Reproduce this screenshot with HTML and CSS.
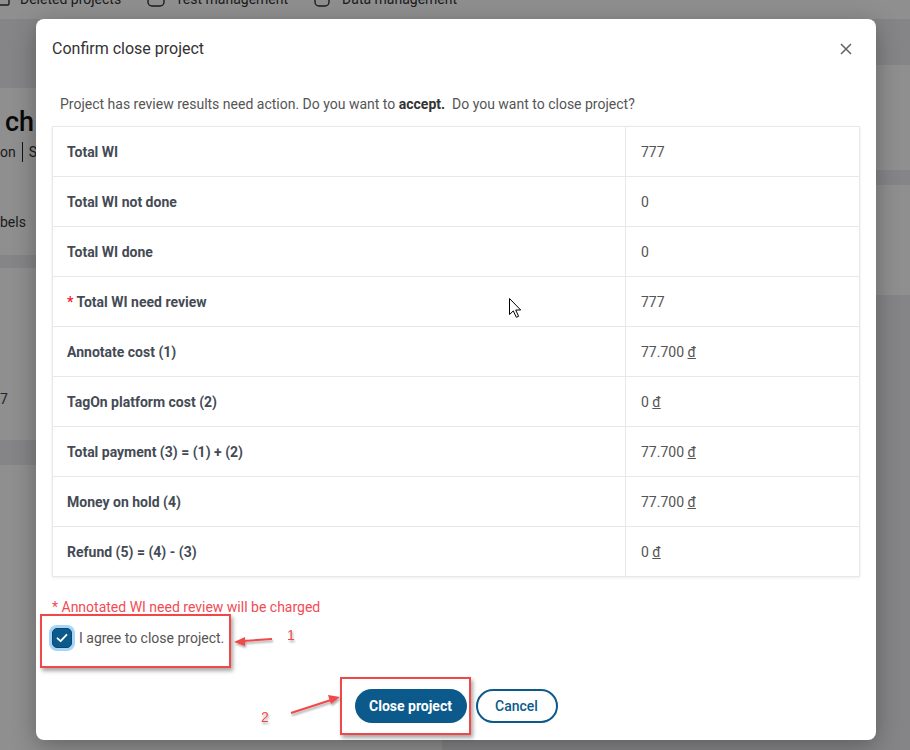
FILE: index.html
```html
<!DOCTYPE html>
<html lang="en">
  <head>
    <meta charset="UTF-8" />
    <meta name="viewport" content="width=device-width, initial-scale=1.0" />
    <title>Confirm close project</title>
    <link rel="stylesheet" href="styles.css">
  </head>
  <body>
    <!-- page behind the dialog -->
    <div class="page">
      <nav class="topnav">
        <span class="nav-item nav-first">
          <svg width="12" height="14" viewBox="0 0 12 14"><rect x="1" y="1" width="10" height="12" rx="1.5" fill="none" stroke="#333" stroke-width="1.4"/></svg>
          Deleted projects
        </span>
        <span class="nav-item">
          <svg width="18" height="16" viewBox="0 0 18 16"><rect x="1" y="1" width="16" height="14" rx="4" fill="none" stroke="#333" stroke-width="1.4"/></svg>
          Test management
        </span>
        <span class="nav-item">
          <svg width="18" height="16" viewBox="0 0 18 16"><rect x="1" y="1" width="14" height="14" rx="4" fill="none" stroke="#333" stroke-width="1.4"/></svg>
          Data management
        </span>
      </nav>

      <div class="columns">
        <div class="col-left">
          <section class="card card-head">
            <h1 class="project-name">ch</h1>
            <div class="project-meta"><span>on</span><span class="sep"></span><span>S</span></div>
            <div class="project-tabs">bels</div>
          </section>
          <section class="card card-stats">
            <div class="stat">7</div>
          </section>
          <section class="card card-rest"></section>
        </div>
        <div class="col-right">
          <section class="card card-side-a"></section>
          <section class="card card-side-b"></section>
        </div>
      </div>
    </div>

    <div class="backdrop"></div>

    <!-- dialog -->
    <div class="modal">
      <div class="modal-header">
        <span class="modal-title">Confirm close project</span>
        <button class="modal-close" aria-label="Close">
          <svg width="12" height="12" viewBox="0 0 12 12"><path d="M1 1 L11 11 M11 1 L1 11" stroke="#5f6368" stroke-width="1.5" fill="none"/></svg>
        </button>
      </div>

      <div class="modal-body">
        <p class="modal-desc">Project has review results need action. Do you want to <b>accept.</b>&nbsp; Do you want to close project?</p>

        <div class="summary">
          <div class="cell label">Total WI</div>
          <div class="cell value"><span>777</span></div>
          <div class="cell label">Total WI not done</div>
          <div class="cell value"><span>0</span></div>
          <div class="cell label">Total WI done</div>
          <div class="cell value"><span>0</span></div>
          <div class="cell label"><span><span class="req">*</span> Total WI need review</span></div>
          <div class="cell value"><span>777</span></div>
          <div class="cell label">Annotate cost (1)</div>
          <div class="cell value"><span>77.700 <u>đ</u></span></div>
          <div class="cell label">TagOn platform cost (2)</div>
          <div class="cell value"><span>0 <u>đ</u></span></div>
          <div class="cell label">Total payment (3) = (1) + (2)</div>
          <div class="cell value"><span>77.700 <u>đ</u></span></div>
          <div class="cell label">Money on hold (4)</div>
          <div class="cell value"><span>77.700 <u>đ</u></span></div>
          <div class="cell label last">Refund (5) = (4) - (3)</div>
          <div class="cell value last"><span>0 <u>đ</u></span></div>
        </div>

        <p class="charge-note">* Annotated WI need review will be charged</p>

        <label class="agree">
          <span class="check">
            <svg width="14" height="14" viewBox="0 0 14 14"><path d="M2.5 7.3 L5.6 10.2 L11.5 3.8" stroke="#fff" stroke-width="1.8" fill="none" stroke-linecap="round" stroke-linejoin="round"/></svg>
          </span>
          <span>I agree to close project.</span>
        </label>
      </div>

      <div class="modal-footer">
        <button class="btn btn-primary">Close project</button>
        <button class="btn btn-outline">Cancel</button>
      </div>
    </div>

    <!-- red annotations drawn over the screenshot -->
    <div class="mark mark-agree"></div>
    <div class="mark mark-close"></div>
    <svg class="annotations" width="910" height="750" viewBox="0 0 910 750">
      <defs>
        <filter id="shade" x="-20%" y="-20%" width="140%" height="140%">
          <feDropShadow dx="1" dy="2" stdDeviation="1" flood-color="#000" flood-opacity="0.35"/>
        </filter>
      </defs>
      <g filter="url(#shade)" fill="#f04848" stroke="#f04848">
        <line x1="272" y1="639" x2="243" y2="641" stroke-width="2"/>
        <polygon points="234,642 245,637 245,646" stroke="none"/>
        <line x1="291" y1="713" x2="331" y2="700" stroke-width="2"/>
        <polygon points="340,697 328,695 331,704" stroke="none"/>
        <text x="287" y="640" class="num" stroke="none">1</text>
        <text x="261" y="722" class="num" stroke="none">2</text>
      </g>
      <path class="cursor" d="M509.5 298.5 L509.5 314.5 L513.3 310.9 L516.3 317.3 L518.6 316.3 L515.7 310 L520.7 310 Z"/>
    </svg>
  </body>
</html>
```

FILE: styles.css
```css
:root {
  --brand: #0c5a8c;
  --line: #e6e8ec;
  --text: #333;
  --muted: #555;
  --danger: #f24b55;
}

* {
  box-sizing: border-box;
}

body {
  margin: 0;
  width: 910px;
  height: 750px;
  overflow: hidden;
  position: relative;
  font-family: Roboto, "Liberation Sans", sans-serif;
  color: var(--text);
  background: #eeeef3;
}

/* background page */
.page {
  height: 750px;
  display: flex;
  flex-direction: column;
  background: #eeeef3;
}

.topnav {
  height: 19px;
  flex-shrink: 0;
  background: #fff;
  display: flex;
  overflow: hidden;
  font-size: 14px;
}

.nav-item {
  display: flex;
  align-items: center;
  gap: 10px;
  margin-top: -11px;
  height: 20px;
  margin-right: 26px;
  color: #333;
}

.nav-first {
  margin-left: -2px;
}

.columns {
  flex: 1;
  display: flex;
}

.col-left {
  width: 442px;
  display: flex;
  flex-direction: column;
  padding-top: 69px;
}

.col-right {
  flex: 1;
  display: flex;
  flex-direction: column;
  padding-top: 46px;
}

.card {
  background: #fff;
}

.card-head {
  height: 167px;
  padding: 18px 0 0 5px;
}

.project-name {
  margin: 0;
  font-size: 27px;
  font-weight: 500;
  line-height: 32px;
  color: #111;
}

.project-meta {
  margin: 4px 0 0 -5px;
  font-size: 14px;
  display: flex;
  align-items: center;
  gap: 6px;
}

.sep {
  width: 1px;
  height: 20px;
  background: #222;
}

.project-tabs {
  margin: 52px 0 0 -5px;
  font-size: 14px;
  color: #333;
}

.card-stats {
  height: 172px;
  margin-top: 13px;
  padding: 123px 0 0 0;
  font-size: 14px;
  color: #444;
}

.card-rest {
  flex: 1;
  margin-top: 25px;
}

.card-side-a {
  height: 105px;
}

.card-side-b {
  height: 110px;
  margin-top: 15px;
}

.backdrop {
  position: absolute;
  inset: 0;
  background: rgba(0, 0, 0, 0.44);
}

/* dialog */
.modal {
  position: absolute;
  left: 36px;
  top: 19px;
  width: 840px;
  height: 721px;
  background: #fff;
  border-radius: 8px;
  box-shadow: 0 6px 24px rgba(0, 0, 0, 0.3);
  display: flex;
  flex-direction: column;
}

.modal-header {
  height: 59px;
  padding: 1px 22px 0 16px;
  display: flex;
  align-items: center;
  justify-content: space-between;
}

.modal-title {
  font-size: 16px;
  line-height: 22px;
  color: #333;
}

.modal-close {
  width: 16px;
  height: 16px;
  padding: 0;
  border: none;
  background: none;
  display: flex;
  align-items: center;
  justify-content: center;
}

.modal-body {
  padding: 16px 16px 0;
}

.modal-desc {
  margin: 0 0 12px;
  padding-left: 8px;
  font-size: 14px;
  line-height: 20px;
  color: var(--muted);
}

.modal-desc b {
  color: #333;
}

.summary {
  display: grid;
  grid-template-columns: 572px 1fr;
  border: 1px solid var(--line);
  box-shadow: 0 1px 3px rgba(0, 0, 0, 0.08);
}

.cell {
  height: 50px;
  display: flex;
  align-items: center;
  font-size: 14px;
  border-bottom: 1px solid var(--line);
}

.cell.last {
  height: 49px;
  border-bottom: none;
}

.label {
  padding-left: 14px;
  font-weight: 700;
  color: #444b55;
}

.value {
  padding-left: 15px;
  border-left: 1px solid var(--line);
  color: var(--muted);
}

.req {
  color: #f5222d;
}

.charge-note {
  margin: 20px 0 0;
  font-size: 14px;
  line-height: 20px;
  color: var(--danger);
}

.agree {
  margin-top: 11px;
  display: flex;
  align-items: center;
  gap: 7px;
  font-size: 14px;
  line-height: 20px;
  color: var(--muted);
}

.check {
  width: 20px;
  height: 20px;
  border-radius: 5px;
  background: var(--brand);
  border: 1px solid #0a4770;
  box-shadow: 0 0 0 3px #a6d5f7;
  display: flex;
  align-items: center;
  justify-content: center;
}

.modal-footer {
  margin-top: 41px;
  display: flex;
  justify-content: center;
  gap: 9px;
}

.btn {
  height: 34px;
  border-radius: 17px;
  font-family: Roboto, "Liberation Sans", sans-serif;
  font-size: 14px;
  font-weight: 700;
  cursor: pointer;
}

.btn-primary {
  width: 112px;
  border: none;
  background: var(--brand);
  color: #fff;
}

.btn-outline {
  width: 82px;
  border: 2px solid var(--brand);
  background: #fff;
  color: var(--brand);
  font-weight: 500;
}

/* annotations */
.mark {
  position: absolute;
  border: 2px solid #f04848;
  box-shadow: 2px 3px 4px rgba(0, 0, 0, 0.35);
}

.mark-agree {
  left: 40px;
  top: 614px;
  width: 191px;
  height: 54px;
}

.mark-close {
  left: 340px;
  top: 677px;
  width: 131px;
  height: 58px;
}

.annotations {
  position: absolute;
  left: 0;
  top: 0;
  pointer-events: none;
}

.num {
  font-family: "Liberation Sans", sans-serif;
  font-size: 14px;
}

.cursor {
  fill: #fff;
  stroke: #000;
  stroke-width: 1;
}
```
